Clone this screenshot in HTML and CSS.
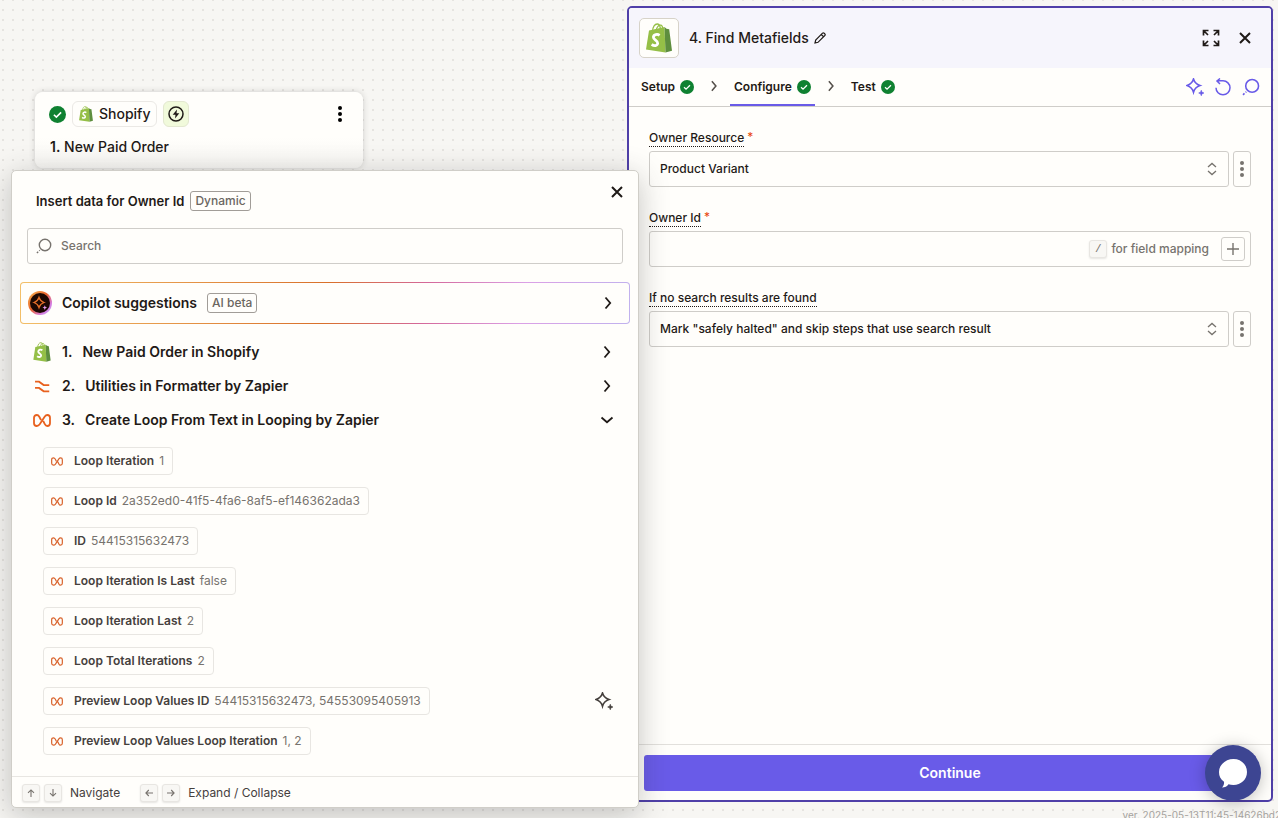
FILE: index.html
```html
<!DOCTYPE html>
<html lang="en">
<head>
  <meta charset="UTF-8">
  <title>Zap editor</title>
  <meta name="viewport" content="width=device-width, initial-scale=1.0">
  <link rel="stylesheet" href="styles.css">
</head>
<body>
  <!-- shared icons -->
  <svg class="sprite" aria-hidden="true">
    <symbol id="shopify" viewBox="0 0 26 30">
      <path d="M6.5 9C6.500 3.500 9 .8 11.500 1c2.500.2 3 3.500 3 7M10 8c.5-4 3-6.500 5-5.800 1.500.6 1.800 2.500 1.800 4.800" fill="none" stroke="#95bf47" stroke-width="1.300"/>
      <path d="M3 7.500 18.500 4l1 25.500L0 26.500z" fill="#95bf47"/>
      <path d="M18.500 4l2 1.800 2.700.4L26 27.800l-6.500 1.700z" fill="#5e8e3e"/>
      <path d="M13.600 12.300C11.500 10.800 7.600 11.300 7.400 14.200c-.2 2.800 4.700 3.200 4.300 6.200-.4 2.600-3.700 2.800-6 .9" fill="none" stroke="#fff" stroke-width="2.800"/>
    </symbol>
    <symbol id="check" viewBox="0 0 16 16">
      <circle cx="8" cy="8" r="8" fill="#0f8131"/>
      <path d="M4.600 8.200l2.300 2.200 4.500-4.400" fill="none" stroke="#fff" stroke-width="1.500"/>
    </symbol>
    <symbol id="close" viewBox="0 0 12 12">
      <path d="M1 1l10 10M11 1L1 11" fill="none" stroke="currentColor" stroke-width="2"/>
    </symbol>
    <symbol id="chevron" viewBox="0 0 8 14">
      <path d="M1.500 1.500l4.700 5.500-4.700 5.500" fill="none" stroke="currentColor" stroke-width="1.800"/>
    </symbol>
    <symbol id="dots" viewBox="0 0 4 16">
      <circle cx="2" cy="2" r="2"/><circle cx="2" cy="8" r="2"/><circle cx="2" cy="14" r="2"/>
    </symbol>
    <symbol id="updown" viewBox="0 0 10 14">
      <path d="M1 5l4-3.600L9 5M1 9l4 3.600L9 9" fill="none" stroke="currentColor" stroke-width="1.300"/>
    </symbol>
    <symbol id="search" viewBox="0 0 16 16">
      <circle cx="9" cy="7" r="5.700" fill="none" stroke="currentColor" stroke-width="1.400"/>
      <path d="M3.800 12.200l-.6.600M2.200 13.700l-1.300 1.300" fill="none" stroke="currentColor" stroke-width="1.400"/>
    </symbol>
    <symbol id="sparkle" viewBox="0 0 18 18">
      <path d="M7.500 1c.9 3 2.900 5.300 6.500 6.500-3.600 1.200-5.600 3.500-6.500 6.800C6.600 11 4.600 8.700 1 7.500 4.600 6.300 6.600 4 7.500 1z" fill="none" stroke="currentColor" stroke-width="1.600"/>
      <path d="M15.300 12.300l.7 2 1.900.7-1.900.7-.7 2-.7-2-1.900-.7 1.900-.7z" fill="currentColor" stroke="currentColor" stroke-width=".7"/>
    </symbol>
    <symbol id="loop" viewBox="0 0 18 13">
      <path d="M8 6L6.300 2.800C5.600 1.600 5 1 3.900 1 2.100 1 1 2 1 3.700v5.600C1 11 2.100 12 3.800 12c1.300 0 2-.5 2.900-1.700l5.100-7.700C12.600 1.400 13.200 1 14.300 1 16 1 17 2 17 3.700v5.600c0 1.700-1 2.700-2.700 2.700-1.200 0-1.900-.6-2.500-1.800L10.200 7" fill="none" stroke="currentColor" stroke-width="1.800"/>
    </symbol>
    <symbol id="formatter" viewBox="0 0 18 14">
      <path d="M1.500 1.800h4.300l5 3.700h6M1.500 8.500h4.300l5 3.700h6" fill="none" stroke="currentColor" stroke-width="2"/>
    </symbol>
    <symbol id="arrow" viewBox="0 0 8 8">
      <path d="M4 8V1M1 3.800L4 .9l3 2.900" fill="none" stroke="currentColor" stroke-width="1.100"/>
    </symbol>
  </svg>

  <div class="editor">
    <main class="canvas">
      <article class="step">
        <div class="step-top">
          <svg class="check-lg"><use href="#check"/></svg>
          <span class="app-tag"><svg class="app-icon"><use href="#shopify"/></svg>Shopify</span>
          <span class="trigger-tag">
            <svg viewBox="0 0 16 16"><circle cx="8" cy="8" r="7" fill="none" stroke="#1f1a17" stroke-width="1.500"/><path d="M9 3.500L4.700 8.800h2.800L7 12.500l4.300-5.300H8.500z" fill="#1f1a17"/></svg>
          </span>
          <button class="icon-btn step-menu" aria-label="Step menu"><svg class="dots-lg"><use href="#dots"/></svg></button>
        </div>
        <p class="step-name"><b>1.</b> New Paid Order</p>
      </article>
    </main>

    <aside class="panel">
      <header class="panel-head">
        <span class="logo-box"><svg><use href="#shopify"/></svg></span>
        <h1>4. Find Metafields</h1>
        <button class="icon-btn" aria-label="Rename">
          <svg class="pencil" viewBox="0 0 12 12"><path d="M1 11l.7-3L8.500 1.200c.6-.5 1.200-.4 1.700 0l.6.600c.5.500.5 1.100 0 1.700L4 10.300zM7.300 2.500l2.300 2.300" fill="none" stroke="currentColor" stroke-width="1.200"/></svg>
        </button>
        <div class="head-actions">
          <button class="icon-btn" aria-label="Expand">
            <svg class="expand" viewBox="0 0 18 18"><path d="M1.500 6.500v-5h5M1.500 1.500l4.500 4.500M11.500 1.500h5v5M16.500 1.500L12 6M1.500 11.500v5h5M1.500 16.500L6 12M16.500 11.500v5h-5M16.500 16.500L12 12" fill="none" stroke="currentColor" stroke-width="1.700"/></svg>
          </button>
          <button class="icon-btn" aria-label="Close panel"><svg class="close"><use href="#close"/></svg></button>
        </div>
      </header>

      <nav class="tabs">
        <button class="tab">Setup <svg class="check"><use href="#check"/></svg></button>
        <svg class="tab-sep"><use href="#chevron"/></svg>
        <button class="tab active">Configure <svg class="check"><use href="#check"/></svg></button>
        <svg class="tab-sep"><use href="#chevron"/></svg>
        <button class="tab">Test <svg class="check"><use href="#check"/></svg></button>
        <div class="tab-tools">
          <button class="icon-btn" aria-label="Copilot"><svg><use href="#sparkle"/></svg></button>
          <button class="icon-btn" aria-label="Undo">
            <svg viewBox="0 0 18 18"><path d="M2 9.800a7 7 0 1 0 7-7H2.800M6 .5L3 3l3 3" fill="none" stroke="currentColor" stroke-width="1.500"/></svg>
          </button>
          <button class="icon-btn" aria-label="Search"><svg><use href="#search"/></svg></button>
        </div>
      </nav>

      <form class="fields">
        <div class="field">
          <div class="label-row"><label for="resource">Owner Resource</label><span class="req">*</span></div>
          <div class="control">
            <div class="select">
              <select id="resource"><option>Product Variant</option></select>
              <svg><use href="#updown"/></svg>
            </div>
            <button type="button" class="more" aria-label="Owner Resource options"><svg><use href="#dots"/></svg></button>
          </div>
        </div>
        <div class="field">
          <div class="label-row"><label for="owner">Owner Id</label><span class="req">*</span></div>
          <div class="mapping">
            <input type="text" id="owner">
            <kbd>/</kbd><span>for field mapping</span>
            <button type="button" class="plus" aria-label="Insert data"><svg viewBox="0 0 12 12"><path d="M6 0v12M0 6h12" stroke="currentColor" stroke-width="1.400"/></svg></button>
          </div>
        </div>
        <div class="field">
          <div class="label-row"><label for="empty">If no search results are found</label></div>
          <div class="control">
            <div class="select">
              <select id="empty"><option>Mark "safely halted" and skip steps that use search result</option></select>
              <svg><use href="#updown"/></svg>
            </div>
            <button type="button" class="more" aria-label="Search result options"><svg><use href="#dots"/></svg></button>
          </div>
        </div>
      </form>

      <footer class="panel-foot"><button class="continue">Continue</button></footer>
    </aside>
  </div>

  <section class="picker">
    <header class="picker-head">
      <h2>Insert data for Owner Id</h2>
      <span class="badge">Dynamic</span>
      <button class="icon-btn" aria-label="Close"><svg class="close"><use href="#close"/></svg></button>
    </header>
    <label class="search">
      <svg><use href="#search"/></svg>
      <input type="text" placeholder="Search" aria-label="Search">
    </label>
    <button class="copilot">
      <svg class="copilot-icon" viewBox="0 0 24 24">
        <defs><linearGradient id="ring" x1="0" y1="0" x2="1" y2="1"><stop offset="0" stop-color="#f7b955"/><stop offset=".45" stop-color="#e8622a"/><stop offset=".75" stop-color="#d67be0"/><stop offset="1" stop-color="#c3b4f5"/></linearGradient></defs>
        <circle cx="12" cy="12" r="12" fill="url(#ring)"/>
        <circle cx="12" cy="12" r="10" fill="#1c0803"/>
        <path d="M11 6.500c.8 2.500 2.200 4 5 5-2.800 1-4.200 2.500-5 5-.8-2.500-2.200-4-5-5 2.800-1 4.200-2.500 5-5z" fill="none" stroke="#e8702a" stroke-width="1.300"/>
        <path d="M16.800 14.300l.7 1.600 1.600.7-1.600.7-.7 1.600-.7-1.600-1.600-.7 1.600-.7z" fill="#e59bf0"/>
      </svg>
      <span>Copilot suggestions</span>
      <span class="badge">AI beta</span>
      <svg class="chev"><use href="#chevron"/></svg>
    </button>

    <div class="sources">
      <button class="source"><svg class="source-icon tall"><use href="#shopify"/></svg><span class="num">1.</span>New Paid Order in Shopify<svg class="chev"><use href="#chevron"/></svg></button>
      <button class="source"><svg class="source-icon"><use href="#formatter"/></svg><span class="num">2.</span>Utilities in Formatter by Zapier<svg class="chev"><use href="#chevron"/></svg></button>
      <button class="source" aria-expanded="true"><svg class="source-icon"><use href="#loop"/></svg><span class="num">3.</span>Create Loop From Text in Looping by Zapier<svg class="chev open"><use href="#chevron"/></svg></button>
    </div>

    <ul class="values">
      <li><button class="chip"><svg><use href="#loop"/></svg><b>Loop Iteration</b><span>1</span></button></li>
      <li><button class="chip"><svg><use href="#loop"/></svg><b>Loop Id</b><span>2a352ed0-41f5-4fa6-8af5-ef146362ada3</span></button></li>
      <li><button class="chip"><svg><use href="#loop"/></svg><b>ID</b><span>54415315632473</span></button></li>
      <li><button class="chip"><svg><use href="#loop"/></svg><b>Loop Iteration Is Last</b><span>false</span></button></li>
      <li><button class="chip"><svg><use href="#loop"/></svg><b>Loop Iteration Last</b><span>2</span></button></li>
      <li><button class="chip"><svg><use href="#loop"/></svg><b>Loop Total Iterations</b><span>2</span></button></li>
      <li>
        <button class="chip"><svg><use href="#loop"/></svg><b>Preview Loop Values ID</b><span>54415315632473, 54553095405913</span></button>
        <button class="icon-btn suggest" aria-label="Suggestion"><svg><use href="#sparkle"/></svg></button>
      </li>
      <li><button class="chip"><svg><use href="#loop"/></svg><b>Preview Loop Values Loop Iteration</b><span>1, 2</span></button></li>
    </ul>

    <footer class="picker-foot">
      <div class="hint">
        <kbd><svg><use href="#arrow"/></svg></kbd>
        <kbd><svg class="down"><use href="#arrow"/></svg></kbd>
        <span>Navigate</span>
      </div>
      <div class="hint">
        <kbd><svg class="left"><use href="#arrow"/></svg></kbd>
        <kbd><svg class="right"><use href="#arrow"/></svg></kbd>
        <span>Expand / Collapse</span>
      </div>
    </footer>
  </section>

  <button class="chat" aria-label="Open chat">
    <svg viewBox="0 0 30 30"><path d="M15.500 1C23 1 29 6.500 29 14s-6 13-13.500 13c-1.900 0-3.600-.3-5-.8C9 28.500 7 29.300 4 29.500c1.500-1.600 2.300-3.500 2-5.800C2.500 21.500 1 18 1 14 1 6.500 8 1 15.500 1z" fill="#fff"/></svg>
  </button>
  <small class="version">ver. 2025-05-13T11:45-14626bd2</small>
</body>
</html>
```

FILE: styles.css
```css
* { box-sizing: border-box; }
body {
  margin: 0; height: 100vh; overflow: hidden; position: relative;
  font: 12px/16px Inter, "Liberation Sans", sans-serif; color: #1f1a17;
  background: #f7f6f3;
}
h1, h2, p, ul { margin: 0; padding: 0; }
svg { display: block; flex: none; }
button, input, select { font: inherit; color: inherit; }
button { cursor: pointer; }
.sprite { position: absolute; width: 0; height: 0; }
.icon-btn { padding: 0; border: none; background: none; }
.close { width: 12px; height: 12px; }
.check { width: 14px; height: 14px; }

.editor {
  display: flex; height: 100%; padding: 6px 5px 16px 0;
  background: radial-gradient(circle, #e6e4e0 1px, transparent 1px) 8px 5px / 10px 10px;
}
.canvas { flex: 1; position: relative; }

/* step on the canvas */
.step {
  position: absolute; left: 35px; top: 86px; width: 328px;
  padding: 9px 14px 11px; border-radius: 8px;
  background: linear-gradient(#fffefb 60%, #f7f6f3); box-shadow: 0 0 6px rgba(45,46,46,0.2);
}
.step-top { display: flex; align-items: center; gap: 6px; }
.check-lg { width: 17px; height: 17px; }
.app-tag {
  display: flex; align-items: center; gap: 6px; height: 26px; padding: 0 6px;
  border: 1px solid #ebe9e5; border-radius: 6px; font-size: 14px; font-weight: 500;
}
.app-icon { width: 14px; height: 16px; }
.trigger-tag { padding: 4px; border: 1px solid #e3e8d0; border-radius: 6px; background: #f1fadb; }
.trigger-tag svg { width: 16px; height: 16px; }
.step-menu { margin-left: auto; margin-right: 7px; }
.dots-lg { width: 4px; height: 16px; }
.step-name { margin-top: 10px; padding-left: 1px; font-size: 14px; line-height: 20px; font-weight: 500; }
.step-name b { font-weight: 600; }

/* right panel */
.panel {
  display: flex; flex-direction: column; width: calc(50vw + 7px);
  border: 2px solid #4f3fa8; border-radius: 5px; background: #fffefb; overflow: hidden;
}
.panel-head { display: flex; align-items: center; height: 60px; padding: 0 20px 0 10px; background: #f6f5fc; }
.logo-box { padding: 4px 6px; border: 1px solid #d7d3c9; border-radius: 5px; background: #fffefb; }
.logo-box svg { width: 26px; height: 30px; }
h1 { margin: 0 5px 0 10px; font-size: 14px; line-height: 20px; font-weight: 500; }
.pencil { width: 12px; height: 12px; }
.head-actions { display: flex; align-items: center; gap: 19px; margin-left: auto; }
.expand { width: 18px; height: 18px; }
.tabs { display: flex; height: 39px; padding: 0 10px 0 8px; border-bottom: 1px solid #cfcdc9; }
.tab {
  display: flex; align-items: center; gap: 5px; padding: 0 4px;
  border: none; background: none; font-weight: 600;
}
.tab.active { box-shadow: inset 0 -2px #695be8; }
.tab-sep { width: 8px; height: 12px; margin: 12px 12px 0; color: #55504b; }
.tab-tools { display: flex; align-items: center; gap: 10px; margin-left: auto; padding-right: 1px; color: #695be8; }
.tab-tools svg { width: 18px; height: 18px; }

.fields { flex: 1; display: flex; flex-direction: column; gap: 22px; padding: 22px 20px; }
.label-row { display: flex; gap: 3px; margin-bottom: 4px; }
.label-row label { line-height: 17px; border-bottom: 1px dotted #1f1a17; font-weight: 500; }
.req { color: #e8450b; }
.control { display: flex; gap: 4px; }
.select { flex: 1; position: relative; }
.select select {
  appearance: none; width: 100%; height: 36px; padding: 0 30px 0 10px;
  border: 1px solid #cfcdc9; border-radius: 3px; background: transparent; font-weight: 500;
}
.select svg { position: absolute; right: 12px; top: 11px; width: 10px; height: 14px; color: #77736e; pointer-events: none; }
.more {
  display: flex; align-items: center; justify-content: center; width: 18px; padding: 0;
  border: 1px solid #cfcdc9; border-radius: 3px; background: transparent;
}
.more svg { width: 4px; height: 16px; fill: #77736e; }
.mapping {
  display: flex; align-items: center; height: 36px; padding: 0 5px 0 10px;
  border: 1px solid #cfcdc9; border-radius: 3px; color: #77736e; font-weight: 500;
}
.mapping input { flex: 1; min-width: 0; border: none; background: none; outline: none; }
.mapping span { margin: 0 12px 0 4px; }
kbd {
  display: flex; align-items: center; justify-content: center; width: 18px; height: 18px;
  border: 1px solid #e8e6e2; border-radius: 3px; background: #f8f7f4;
  box-shadow: 0 1px 2px rgba(0,0,0,0.1); color: #77736e;
  font: 11px "Liberation Mono", monospace;
}
.plus { padding: 5px; border: 1px solid #cfcdc9; border-radius: 3px; background: none; }
.plus svg { width: 12px; height: 12px; }
.panel-foot { padding: 10px 15px 9px; border-top: 1px solid #e2e0dc; }
.continue {
  display: block; width: 100%; height: 36px; border: none; border-radius: 3px;
  background: #695be8; color: #fff; font-size: 14px; font-weight: 600;
}

/* data picker over the canvas */
.picker {
  position: absolute; left: 11px; top: 170px; bottom: 10px; width: calc(50vw - 11px);
  display: flex; flex-direction: column;
  border: 1px solid #d0cec8; border-radius: 5px; background: #fffefb;
  box-shadow: 0 6px 30px rgba(45,46,46,0.28);
}
.picker-head { display: flex; align-items: center; gap: 6px; padding: 20px 15px 17px 24px; }
h2 { font-size: 13px; line-height: 20px; font-weight: 600; }
.picker-head .icon-btn { margin: -18px 0 0 auto; }
.badge {
  padding: 0 4px; border: 1px solid #a19d98; border-radius: 3px;
  font-size: 12px; line-height: 18px; font-weight: 500; color: #6b6661;
}
.search {
  display: flex; align-items: center; gap: 9px; height: 36px; margin: 0 15px; padding: 0 8px;
  border: 1px solid #cfcdc9; border-radius: 3px;
}
.search svg { width: 16px; height: 16px; color: #77736e; }
.search input { flex: 1; min-width: 0; padding: 0; border: none; background: none; outline: none; font-weight: 500; }
.search input::placeholder { color: #77736e; opacity: 1; }
.copilot {
  display: flex; align-items: center; gap: 10px; height: 42px; margin: 18px 8px 11px; padding: 0 17px 0 7px;
  border: 1px solid transparent; border-radius: 4px; font-size: 14px; font-weight: 600;
  background: linear-gradient(#fffefb, #fffefb) padding-box,
    linear-gradient(100deg, #f3c069, #d9702a 50%, #d4689a 66%, #dba0e6 82%, #c0b2ee) border-box;
}
.copilot-icon { width: 24px; height: 24px; }
.chev { width: 8px; height: 14px; margin-left: auto; }
.chev.open { transform: rotate(90deg); }
.sources { display: flex; flex-direction: column; padding: 0 27px 0 21px; }
.source {
  display: flex; align-items: center; height: 34px; padding: 0;
  border: none; background: none; font-size: 14px; font-weight: 600;
}
.source-icon { width: 18px; height: 13px; margin-right: 11px; color: #e8611e; }
.source-icon.tall { height: 20px; }
.num { margin-right: 10px; }
.values { display: flex; flex-direction: column; gap: 12px; padding: 10px 25px 0 31px; list-style: none; flex: 1; }
.values li { display: flex; align-items: center; justify-content: space-between; }
.chip {
  display: flex; align-items: center; height: 28px; padding: 0 8px 0 7px;
  border: 1px solid #e8e6e2; border-radius: 4px; background: none; color: #77736e;
}
.chip svg { width: 12px; height: 9px; margin-right: 11px; color: #d9622a; }
.chip b { margin-right: 5px; font-weight: 600; color: #45403d; }
.suggest { color: #45403d; }
.suggest svg { width: 18px; height: 18px; }
.picker-foot { display: flex; gap: 20px; padding: 7px 10px 5px; border-top: 1px solid #e8e6e2; color: #45403d; }
.hint { display: flex; align-items: center; gap: 4px; }
.hint span { margin-left: 4px; line-height: 18px; }
.hint svg { width: 8px; height: 8px; }
.down { transform: rotate(180deg); }
.left { transform: rotate(-90deg); }
.right { transform: rotate(90deg); }

.chat {
  position: absolute; right: 17px; bottom: 17px; width: 56px; height: 56px; padding: 13px;
  border: none; border-radius: 50%; background: #3d4592; box-shadow: 0 2px 16px rgba(0,0,0,0.25);
}
.chat svg { width: 30px; height: 30px; }
.version { position: absolute; right: -3px; bottom: -5px; font-size: 10px; color: #a5a29e; }
```
